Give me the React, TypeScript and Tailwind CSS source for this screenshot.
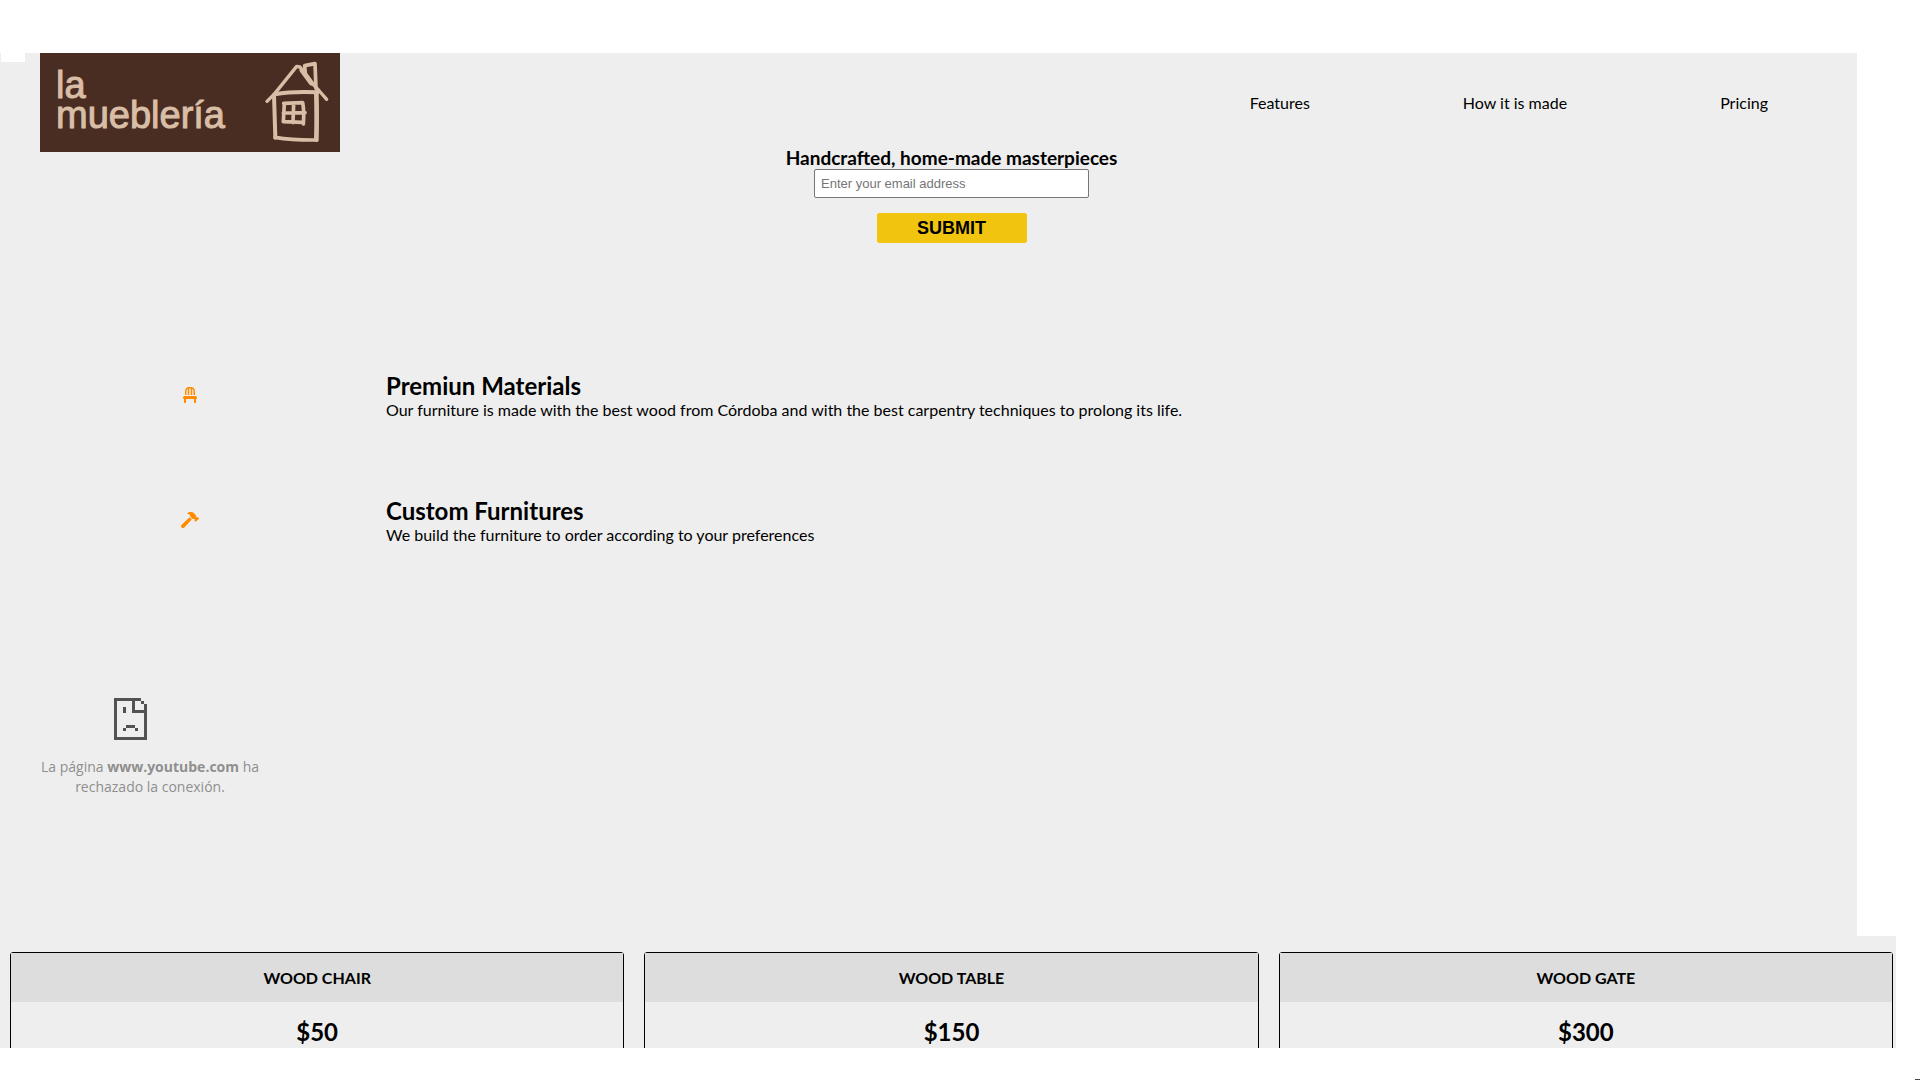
import { FaChair, FaHammer } from 'react-icons/fa';
import type { ReactNode } from 'react';

const navLinks = [
  { label: 'Features', href: '#features' },
  { label: 'How it is made', href: '#how-it-is-made' },
  { label: 'Pricing', href: '#pricing' },
];

const products = [
  { name: 'WOOD CHAIR', price: '$50' },
  { name: 'WOOD TABLE', price: '$150' },
  { name: 'WOOD GATE', price: '$300' },
];

function Logo() {
  return (
    <div className="flex h-[99px] w-[300px] shrink-0 justify-between bg-[#4a2d22] text-[#d8bea6]">
      <div className="pt-[17px] pl-4 font-['Liberation_Sans',Arial,sans-serif] text-[38px] leading-[30px] [-webkit-text-stroke:1px_#d8bea6]">
        la
        <br />
        mueblería
      </div>
      <svg
        className="h-[99px] w-[100px] shrink-0"
        viewBox="0 24 300 297"
        fill="none"
        stroke="currentColor"
        strokeLinecap="round"
        strokeLinejoin="round"
        aria-hidden="true"
      >
        <path d="M81 169 L104 146 L170 64 L180 66 L214 112 L238 138 L260 163" strokeWidth="10" />
        <path d="M186 76 L214 114" strokeWidth="15" />
        <path d="M196 86 L194 62 L225 56 L228 130" strokeWidth="11" />
        <path d="M104 148 Q160 138 232 142" strokeWidth="12" />
        <path d="M102 150 L106 278" strokeWidth="12" />
        <path d="M229 142 Q231 220 229 284" strokeWidth="14" />
        <path d="M105 277 Q160 286 230 285" strokeWidth="11" />
        <path d="M131 175 L188 173 Q193 200 190 237 M133 176 L130 230 L188 232 M161 174 L159 233 M130 204 L195 203" strokeWidth="11" />
      </svg>
    </div>
  );
}

function Feature({ icon, title, children }: { icon: ReactNode; title: string; children: ReactNode }) {
  return (
    <article className="flex h-[125px] items-start">
      <div className="flex h-12 w-[300px] shrink-0 items-center justify-center text-[#ff8c00]">{icon}</div>
      <div className="pl-[46px]">
        <h2 className="text-2xl leading-[29px] font-bold">{title}</h2>
        <p className="text-base leading-5">{children}</p>
      </div>
    </article>
  );
}

function BrokenPageIcon() {
  return (
    <svg className="h-[42px] w-[33px]" viewBox="0 0 11 14" fill="#525252" shapeRendering="crispEdges" aria-hidden="true">
      <path d="M0 0H9V1H7V4H11V5H6V1H1V13H10V2H11V14H0Z" />
      <path d="M9 1h1v1H9zM3 3h1v2H3zM4 9h3v1H4zM3 10h1v1H3zM7 10h1v1H7z" />
    </svg>
  );
}

export default function App() {
  return (
    <div className="relative h-screen overflow-hidden bg-white pt-[53px] font-[Lato,sans-serif] text-base text-black">
      <div className="absolute top-[53px] left-px z-10 h-[9px] w-6 bg-white" />
      <div className="absolute right-0 bottom-0 h-px w-[5px] bg-[#444]" />
      <div className="flex h-[995px] flex-col overflow-hidden">
        <main className="mr-[63px] h-[883px] shrink-0 bg-[#eee] pl-10">
          <header className="flex h-[99px] items-center justify-between pr-[89px]">
            <Logo />
            <nav className="flex gap-[153px]">
              {navLinks.map((link) => (
                <a key={link.href} href={link.href}>
                  {link.label}
                </a>
              ))}
            </nav>
          </header>

          <form className="-mt-[5px] flex flex-col items-center pl-1.5" onSubmit={(e) => e.preventDefault()}>
            <h1 className="text-[19px] leading-[22px] font-bold">
              <label htmlFor="email">Handcrafted, home-made masterpieces</label>
            </h1>
            <input
              id="email"
              type="email"
              placeholder="Enter your email address"
              className="h-[29px] w-[275px] rounded-xs border border-[#767676] bg-white px-1.5 font-['Liberation_Sans',Arial,sans-serif] text-[13px] placeholder:text-[#757575]"
            />
            <button
              type="submit"
              className="mt-[15px] h-[30px] w-[150px] rounded-xs bg-[#f1c40f] font-['Liberation_Sans',Arial,sans-serif] text-lg leading-[30px] font-black"
            >
              SUBMIT
            </button>
          </form>

          <section id="features" className="pt-32">
            <Feature icon={<FaChair size={16} />} title="Premiun Materials">
              Our furniture is made with the best wood from Córdoba and with the best carpentry techniques to prolong its
              life.
            </Feature>
            <Feature icon={<FaHammer size={18} />} title="Custom Furnitures">
              We build the furniture to order according to your preferences
            </Feature>
          </section>

          <section
            id="how-it-is-made"
            className="flex w-[220px] flex-col pt-[77px] font-['Open_Sans',sans-serif] text-sm leading-5 text-[#8f8f8f]"
          >
            <div className="pl-[74px]">
              <BrokenPageIcon />
            </div>
            <p className="mt-[17px] text-center">
              <span className="whitespace-nowrap">
                La página <strong>www.youtube.com</strong> ha
              </span>{' '}
              rechazado la conexión.
            </p>
          </section>
        </main>

        <section id="pricing" className="mr-6 grid grow grid-cols-3 gap-5 bg-[#eee] pt-4 pr-[3px] pl-2.5 text-center">
          {products.map((product) => (
            <article key={product.name} className="h-[300px] rounded-[3px] border border-black">
              <h3 className="h-[49px] bg-[#ddd] text-base leading-[49px] font-bold">{product.name}</h3>
              <p className="mt-[15px] text-2xl leading-[29px] font-bold">{product.price}</p>
            </article>
          ))}
        </section>
      </div>
    </div>
  );
}
